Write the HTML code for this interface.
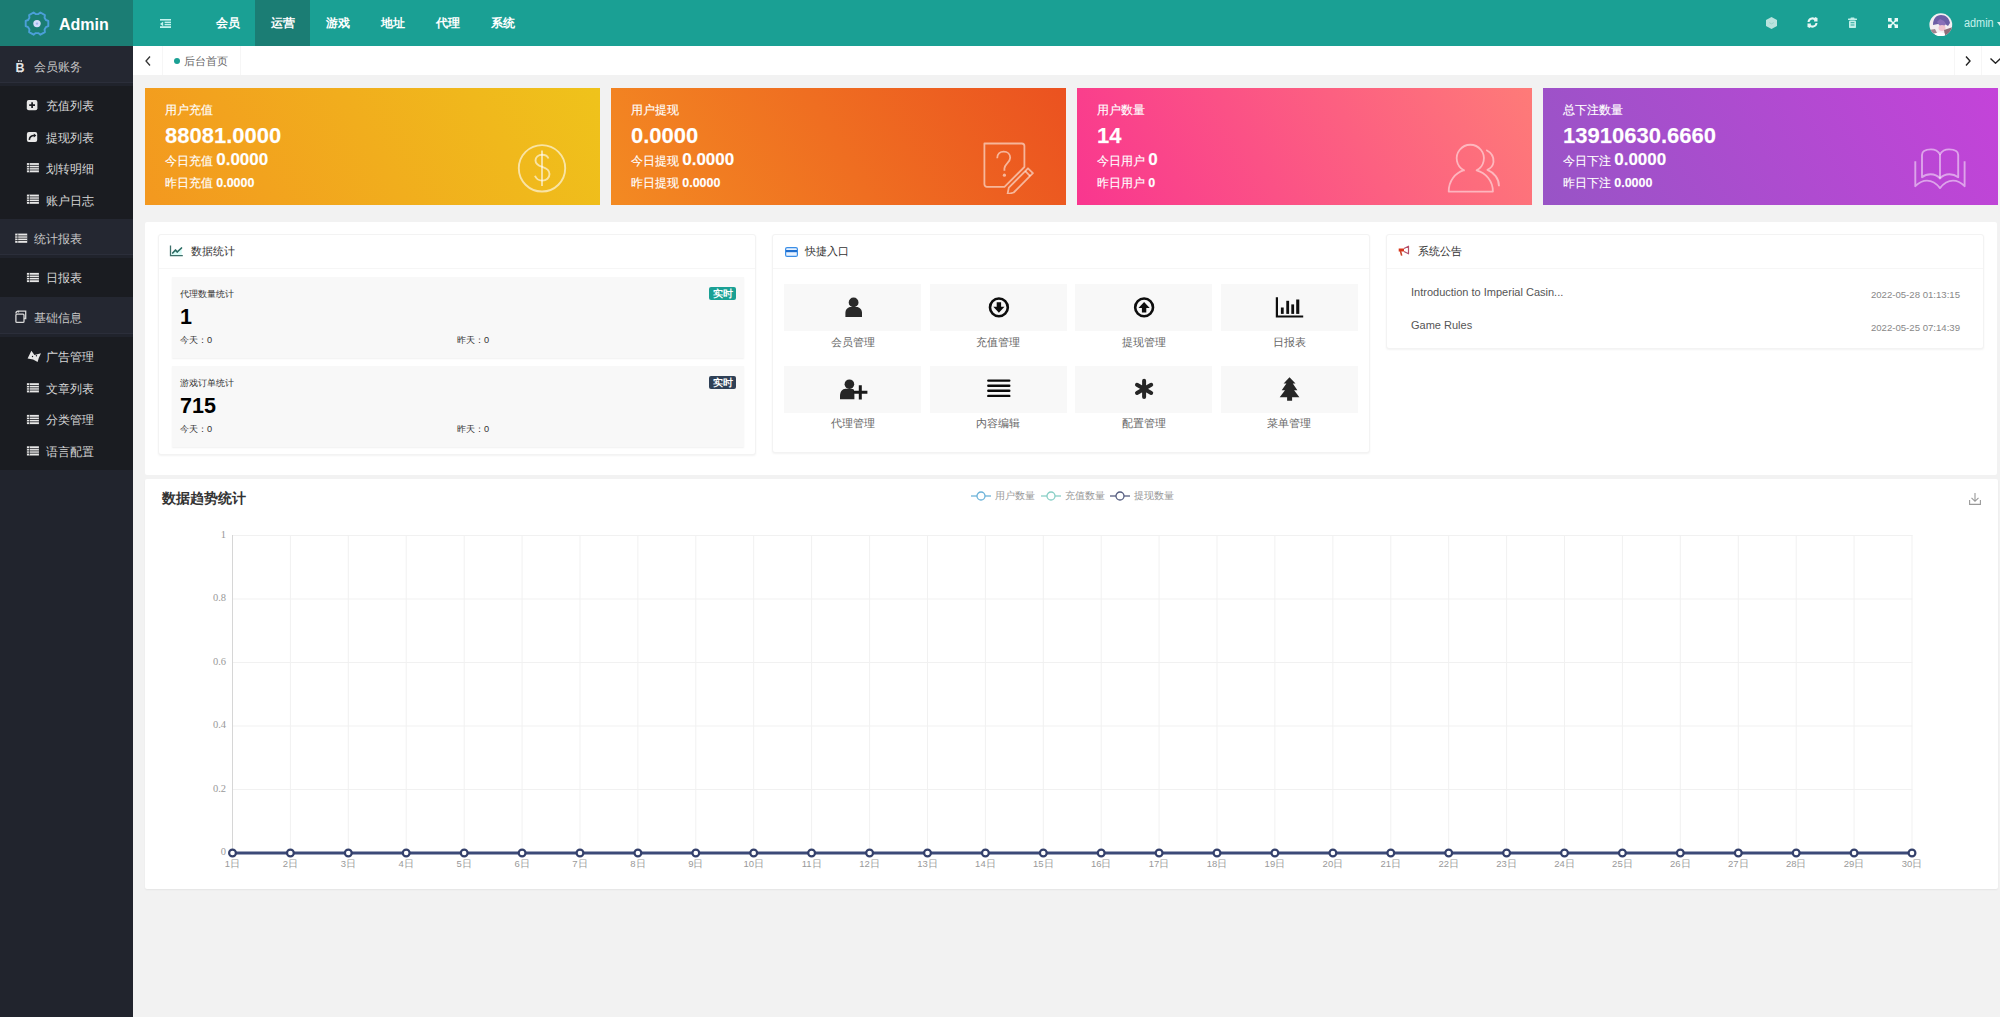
<!DOCTYPE html>
<html><head><meta charset="utf-8">
<style>
*{margin:0;padding:0;box-sizing:border-box}
html,body{width:2000px;height:1017px;overflow:hidden;background:#f2f2f2;font-family:"Liberation Sans",sans-serif;color:#333}
.abs{position:absolute}
#hdr{position:absolute;left:0;top:0;width:2000px;height:46px;background:#1aa094}
#logo{position:absolute;left:0;top:0;width:133px;height:46px;background:#1b7d74}
#logo .t{position:absolute;left:59px;top:14.5px;font-size:16px;font-weight:bold;color:#fff;line-height:20px}
.nav{position:absolute;top:0;height:46px;line-height:46px;width:55px;text-align:center;color:#fff;font-size:12px;font-weight:bold}
.nav.on{background:#1b7d74}
#side{position:absolute;left:0;top:46px;width:133px;height:971px;background:#21242d}
.pi{position:absolute;left:0;width:133px;height:40px;background:#242731;color:#c8c8c8;font-size:11.5px;line-height:40px;box-shadow:inset 0 -3px 0 #20232c,inset 0 -4px 0 #2b2e3a}
.sub{position:absolute;left:0;width:133px;background:#1a1c21}
.si{position:absolute;left:0;width:133px;height:31.5px;line-height:31.5px;color:#d6d6d6;font-size:11.5px}
.pi>span,.si>span{top:1px}
#tabs{position:absolute;left:133px;top:46px;width:1867px;height:29px;background:#fff}
.stat{position:absolute;top:88px;width:455px;height:117px;color:#fff;-webkit-text-stroke:.25px rgba(255,255,255,.6)}
.stat .t1{position:absolute;left:20px;top:14px;font-size:11.5px;line-height:16px}
.stat .t2{position:absolute;left:20px;top:34.5px;font-size:22px;font-weight:bold;line-height:26px}
.stat .t3{position:absolute;left:20px;top:62.5px;font-size:11.5px;line-height:18px}
.stat .t3 b{font-size:17px}
.stat .t4{position:absolute;left:20px;top:87px;font-size:11.5px;line-height:16px}
.stat .t4 span{font-size:12.5px;font-weight:bold}
.panel{position:absolute;background:#fff;border-radius:2px}
.card{position:absolute;background:#fff;border:1px solid #f3f3f3;border-radius:3px;box-shadow:0 1px 2px rgba(0,0,0,.05)}
.card .hd{position:absolute;left:0;top:0;right:0;height:34px;border-bottom:1px solid #f6f6f6;font-size:11px;line-height:33px;color:#333}
.sbox{position:absolute;left:13px;width:572px;height:81px;background:#f8f8f8;box-shadow:0 1px 1.5px rgba(0,0,0,.06)}
.qt{position:absolute;width:137px;height:47px;background:#f8f8f8}
.ql{position:absolute;width:137px;text-align:center;font-size:11px;color:#666;line-height:14px;margin-top:-1.5px}
</style></head><body>
<div id="hdr">
  <div id="logo">
    <svg class="abs" style="left:24px;top:11px" width="26" height="25" viewBox="0 0 26 25"><path d="M21.90 9.00 L24.30 9.99 L24.30 15.21 L21.90 16.20 L20.56 18.51 L20.91 21.08 L16.39 23.69 L14.34 22.11 L11.66 22.11 L9.61 23.69 L5.09 21.08 L5.44 18.51 L4.10 16.20 L1.70 15.21 L1.70 9.99 L4.10 9.00 L5.44 6.69 L5.09 4.12 L9.61 1.51 L11.66 3.09 L14.34 3.09 L16.39 1.51 L20.91 4.12 L20.56 6.69Z" fill="none" stroke="#4b9fd8" stroke-width="1.9" stroke-linejoin="round"/><circle cx="13" cy="12.6" r="3.7" fill="#d4dcfb"/><circle cx="13" cy="12.6" r="1.2" fill="#9fb3ea"/></svg>
    <div class="t">Admin</div>
  </div>
  <svg class="abs" style="left:159.8px;top:18.9px" width="11.4" height="9.2" viewBox="0 0 11.4 9.2"><g fill="#c4f3ee"><rect x="0" y="0" width="11.4" height="1.6"/><rect x="4.6" y="2.6" width="6.8" height="1.6"/><rect x="4.6" y="5" width="6.8" height="1.3"/><rect x="0" y="7.2" width="11.4" height="2"/><path d="M3.2 2.6v4.6L0 4.9z"/></g></svg>
  <div class="nav" style="left:200px">会员</div>
  <div class="nav on" style="left:255px">运营</div>
  <div class="nav" style="left:310px">游戏</div>
  <div class="nav" style="left:365px">地址</div>
  <div class="nav" style="left:420px">代理</div>
  <div class="nav" style="left:475px">系统</div>
  <!-- right icons -->
  <svg class="abs" style="left:1766px;top:17px" width="11" height="12" viewBox="0 0 11 12"><path d="M5.5 0L11 3v6l-5.5 3L0 9V3z" fill="#b9e3de"/><path d="M3.2 5.6l2.3 1.3 2.3-1.3" fill="none" stroke="#8fd0c8" stroke-width=".8"/></svg>
  <svg class="abs" style="left:1807px;top:17px" width="11" height="11" viewBox="0 0 11 11"><g fill="none" stroke="#e6f6f4" stroke-width="2"><path d="M1.5 5A4 4 0 0 1 9 3.5"/><path d="M9.5 6A4 4 0 0 1 2 7.5"/></g><path d="M8 0l2.5 1v3.5H7z" fill="#e6f6f4"/><path d="M3 11L.5 10V6.5H4z" fill="#e6f6f4"/></svg>
  <svg class="abs" style="left:1847px;top:17px" width="11" height="12" viewBox="0 0 11 12"><g fill="#c2efe9"><rect x="3.5" y=".4" width="4" height="1.6" rx=".6"/><rect x="1" y="1.5" width="9" height="1.5" rx=".5"/><rect x="2" y="3.5" width="7" height="7.6" rx="1.2"/></g><path d="M3.6 5.7h3.8M3.6 8h3.8" stroke="#1aa094" stroke-width=".9"/></svg>
  <svg class="abs" style="left:1887.9px;top:17.8px" width="10.2" height="10" viewBox="0 0 10.2 10"><g fill="#eafaf8"><rect x="0" y="0" width="3.6" height="3.6"/><rect x="6.6" y="0" width="3.6" height="3.6"/><rect x="0" y="6.4" width="3.6" height="3.6"/><rect x="6.6" y="6.4" width="3.6" height="3.6"/></g><path d="M2 2l6.2 6M8.2 2L2 8" stroke="#eafaf8" stroke-width="1.4"/></svg>
  <svg class="abs" style="left:1929px;top:12.5px" width="24" height="24" viewBox="0 0 24 24"><defs><clipPath id="avc"><circle cx="11.8" cy="11.7" r="11.4"/></clipPath></defs><g clip-path="url(#avc)"><rect width="24" height="24" fill="#f4eef2"/><path d="M4 12c0-6 3-10 8-10s8 3 9 8l-2 3-3-2-3 1-4-1z" fill="#6d5ea6"/><path d="M8 9l3-3 4 2 2 3-2 2-4 0z" fill="#8a6fb8"/><ellipse cx="13" cy="15" rx="3.5" ry="3" fill="#f2c3cf"/><path d="M15 17l9-3v8l-8 1z" fill="#8f6d79"/><path d="M0 17l6-1 2 4-8 1z" fill="#a18590"/><path d="M6 21c2-2 8-2 10 0v3H6z" fill="#fff"/></g></svg>
  <div class="abs" style="left:1964px;top:14.5px;font-size:12.5px;line-height:16px;color:#c6f1ec;transform:scaleX(.87);transform-origin:0 0">admin</div>
  <svg class="abs" style="left:1997px;top:21.5px" width="6" height="4" viewBox="0 0 6 4"><path d="M0 0h6L3 4z" fill="#d9f1ee"/></svg>
</div>

<div id="side">
  <div class="pi" style="top:0"><span class="abs" style="left:34px">会员账务</span></div>
  <div class="sub" style="top:40px;height:133px">
    <div class="si" style="top:4px"><span class="abs" style="left:46px">充值列表</span></div>
    <div class="si" style="top:35.5px"><span class="abs" style="left:46px">提现列表</span></div>
    <div class="si" style="top:67px"><span class="abs" style="left:46px">划转明细</span></div>
    <div class="si" style="top:98.5px"><span class="abs" style="left:46px">账户日志</span></div>
  </div>
  <div class="pi" style="top:173px;height:39px;line-height:39px"><span class="abs" style="left:34px">统计报表</span></div>
  <div class="sub" style="top:212px;height:39px">
    <div class="si" style="top:4px"><span class="abs" style="left:46px">日报表</span></div>
  </div>
  <div class="pi" style="top:251px"><span class="abs" style="left:34px">基础信息</span></div>
  <div class="sub" style="top:291px;height:133px">
    <div class="si" style="top:4px"><span class="abs" style="left:46px">广告管理</span></div>
    <div class="si" style="top:35.5px"><span class="abs" style="left:46px">文章列表</span></div>
    <div class="si" style="top:67px"><span class="abs" style="left:46px">分类管理</span></div>
    <div class="si" style="top:98.5px"><span class="abs" style="left:46px">语言配置</span></div>
  </div>
<svg class="abs" style="left:0;top:0" width="133" height="480" viewBox="0 46 133 480"><text x="15.6" y="71.6" font-weight="bold" font-size="12.5" fill="#e6e6e6">B</text><path d="M18.8 59.9v2M21.2 59.9v2M18.8 71v1.5M21.2 71v1.5" stroke="#e6e6e6" stroke-width="1.1"/><rect x="26.8" y="100.1" width="10.6" height="10.1" rx="2" fill="#e8e8e8"/><path d="M32.1 102.3v5.8M29.2 105.2h5.8" stroke="#1a1c21" stroke-width="1.7"/><rect x="26.9" y="131.9" width="10.3" height="10.1" rx="2" fill="#e8e8e8"/><path d="M29.3 139.8c.3-3 2.2-4.3 5-4.3" fill="none" stroke="#1a1c21" stroke-width="1.6"/><path d="M33.8 133.6l2.6 1.9-2.6 1.9z" fill="#1a1c21"/><g transform="translate(26.9 163.1)"><rect x="0" y="0" width="12" height="9.2" fill="#e8e8e8"/><path d="M0 2.3h12M0 4.6h12M0 6.9h12" stroke="#1a1c21" stroke-width=".8"/><path d="M2.6 0v9.2" stroke="#1a1c21" stroke-width=".6"/></g><g transform="translate(26.9 194.6)"><rect x="0" y="0" width="12" height="9.2" fill="#e8e8e8"/><path d="M0 2.3h12M0 4.6h12M0 6.9h12" stroke="#1a1c21" stroke-width=".8"/><path d="M2.6 0v9.2" stroke="#1a1c21" stroke-width=".6"/></g><g transform="translate(15.2 233.6)"><rect x="0" y="0" width="12" height="9.2" fill="#e8e8e8"/><path d="M0 2.3h12M0 4.6h12M0 6.9h12" stroke="#1a1c21" stroke-width=".8"/><path d="M2.6 0v9.2" stroke="#1a1c21" stroke-width=".6"/></g><g transform="translate(26.9 272.9)"><rect x="0" y="0" width="12" height="9.2" fill="#e8e8e8"/><path d="M0 2.3h12M0 4.6h12M0 6.9h12" stroke="#1a1c21" stroke-width=".8"/><path d="M2.6 0v9.2" stroke="#1a1c21" stroke-width=".6"/></g><g transform="translate(26.9 383.2)"><rect x="0" y="0" width="12" height="9.2" fill="#e8e8e8"/><path d="M0 2.3h12M0 4.6h12M0 6.9h12" stroke="#1a1c21" stroke-width=".8"/><path d="M2.6 0v9.2" stroke="#1a1c21" stroke-width=".6"/></g><g transform="translate(26.9 414.9)"><rect x="0" y="0" width="12" height="9.2" fill="#e8e8e8"/><path d="M0 2.3h12M0 4.6h12M0 6.9h12" stroke="#1a1c21" stroke-width=".8"/><path d="M2.6 0v9.2" stroke="#1a1c21" stroke-width=".6"/></g><g transform="translate(26.9 446.3)"><rect x="0" y="0" width="12" height="9.2" fill="#e8e8e8"/><path d="M0 2.3h12M0 4.6h12M0 6.9h12" stroke="#1a1c21" stroke-width=".8"/><path d="M2.6 0v9.2" stroke="#1a1c21" stroke-width=".6"/></g><g fill="none" stroke="#d8d8d8" stroke-width="1.3"><path d="M18.5 312.5v-1.3h7.2v7.3H24"/><rect x="15.9" y="314.2" width="8.1" height="8.2" rx="1"/></g><path d="M15.9 313.5c0-1.5.8-2.3 2.4-2.3" fill="none" stroke="#d8d8d8" stroke-width="1.3"/><path d="M27.6 358.6l3.8-7.8 3 4.3 6.6-1.8-2.2 4.8-1.2 4-4.5-2.5z" fill="#e6e6e6"/><circle cx="32.5" cy="356.5" r=".7" fill="#1a1c21"/><circle cx="36.4" cy="355.8" r=".7" fill="#1a1c21"/></svg>
</div>

<div id="tabs">
  <div class="abs" style="left:29px;top:0;width:1px;height:29px;background:#f6f6f6"></div>
  <svg class="abs" style="left:12px;top:10px" width="6" height="10" viewBox="0 0 6 10"><path d="M5 .5L1 5l4 4.5" fill="none" stroke="#333" stroke-width="1.3"/></svg>
  <div class="abs" style="left:41px;top:12px;width:6px;height:6px;border-radius:50%;background:#1aa094"></div>
  <div class="abs" style="left:51px;top:7px;font-size:11px;line-height:16px;color:#666">后台首页</div>
  <div class="abs" style="left:107px;top:0;width:1px;height:29px;background:#f6f6f6"></div>
  <div class="abs" style="left:1821px;top:0;width:1px;height:29px;background:#f6f6f6"></div>
  <div class="abs" style="left:1848px;top:0;width:1px;height:29px;background:#f6f6f6"></div>
  <svg class="abs" style="left:1832px;top:10px" width="6" height="10" viewBox="0 0 6 10"><path d="M1 .5L5 5 1 9.5" fill="none" stroke="#222" stroke-width="1.4"/></svg>
  <svg class="abs" style="left:1857px;top:12px" width="11" height="6" viewBox="0 0 11 6"><path d="M.5.5L5.5 5.2 10.5.5" fill="none" stroke="#222" stroke-width="1.4"/></svg>
</div>

<div class="stat" style="left:145px;background:linear-gradient(60deg,#f3981f 0%,#efc31b 100%)">
  <div class="t1">用户充值</div><div class="t2">88081.0000</div>
  <div class="t3">今日充值 <b>0.0000</b></div><div class="t4">昨日充值 <span>0.0000</span></div>
  <svg class="abs" style="left:372px;top:55px" width="50" height="50" viewBox="0 0 50 50"><g fill="none" stroke="rgba(255,255,255,.6)" stroke-width="1.9"><circle cx="25" cy="25.3" r="23.2"/><path d="M25 7.5v35.5"/><path d="M31.5 15.5c-1-2.6-3.3-3.8-6.3-3.8-4 0-6.7 2.6-6.7 5.8 0 3.5 2.6 5 6.8 6.4 4.7 1.5 7.2 3.3 7.2 7.2 0 3.7-3 6.5-7.2 6.5-3.6 0-6.2-1.7-7.3-4.8"/></g></svg>
</div>
<div class="stat" style="left:611px;background:linear-gradient(60deg,#f38a22 0%,#eb5220 100%)">
  <div class="t1">用户提现</div><div class="t2">0.0000</div>
  <div class="t3">今日提现 <b>0.0000</b></div><div class="t4">昨日提现 <span>0.0000</span></div>
  <svg class="abs" style="left:371px;top:54px" width="52" height="52" viewBox="0 0 52 52"><g fill="none" stroke="rgba(255,255,255,.55)" stroke-width="1.8" stroke-linejoin="round"><path d="M2.4 1.5h37.4c1.5 0 2.6 1.1 2.6 2.6V25L22.5 44.8H5c-1.5 0-2.6-1.1-2.6-2.6z"/><path d="M25.5 52.2l1.3-6.6 19.2-19.3 4.9 4.9-19.2 19.3z"/><path d="M43.3 29.2l4.9 4.9"/><path d="M15.2 16.2c0-3.8 2.6-6.6 6.5-6.6 3.8 0 6.5 2.6 6.5 6.2 0 4.7-5.8 5.8-5.8 10.8v2.2"/></g><circle cx="22.4" cy="33.2" r="1.6" fill="rgba(255,255,255,.55)"/></svg>
</div>
<div class="stat" style="left:1077px;background:linear-gradient(60deg,#f9368f 0%,#fe7b78 100%)">
  <div class="t1">用户数量</div><div class="t2">14</div>
  <div class="t3">今日用户 <b>0</b></div><div class="t4">昨日用户 <span>0</span></div>
  <svg class="abs" style="left:363px;top:52px" width="70" height="60" viewBox="1440 140 70 60"><g fill="none" stroke="rgba(255,255,255,.5)" stroke-width="1.8" stroke-linejoin="round"><path d="M1464 170.4A13.6 13.6 0 1 1 1476.6 170.4C1486 173 1492.9 181 1492.9 191.6H1448.7C1448.7 181 1455 173 1464 170.2z"/><path d="M1486.2 150C1491 152.5 1494 157 1493.5 162 1493 166 1490.5 168.5 1487.4 169.8 1494 172.5 1499 178.5 1499 186.2"/></g></svg>
</div>
<div class="stat" style="left:1543px;background:linear-gradient(60deg,#9854c6 0%,#c443d9 100%)">
  <div class="t1">总下注数量</div><div class="t2">13910630.6660</div>
  <div class="t3">今日下注 <b>0.0000</b></div><div class="t4">昨日下注 <span>0.0000</span></div>
  <svg class="abs" style="left:367px;top:57px" width="60" height="50" viewBox="1910 145 60 50"><g fill="none" stroke="rgba(255,255,255,.5)" stroke-width="1.9" stroke-linejoin="round"><path d="M1915.3 161.2V186.2C1919.5 182 1923 180.6 1927 180.6 1932.5 180.6 1936.5 183.5 1940 188.1 1943.5 183.5 1947.5 180.6 1953 180.6 1957 180.6 1960.5 182 1964.6 186.2V161.2"/><path d="M1922 177.2V155C1922 151.5 1925.5 149.4 1931 149.4 1935 149.4 1938 151 1940 154.2 1942 151 1945 149.4 1949 149.4 1954.5 149.4 1958.2 151.5 1958.2 155V177.2C1955.5 175.2 1952.5 174.3 1949.5 174.3 1945.5 174.3 1942.2 175.8 1940 178.5 1937.8 175.8 1934.5 174.3 1930.5 174.3 1927.5 174.3 1924.5 175.2 1922 177.2z"/><path d="M1940 154.2V178.5"/></g></svg>
</div>

<div class="panel" style="left:145px;top:222px;width:1852px;height:253px"></div>

<div class="card" style="left:158px;top:234px;width:598px;height:221px">
  <div class="hd"><svg class="abs" style="left:10px;top:9px" width="15" height="13" viewBox="0 0 15 13"><path d="M2.2 10.8L3.7 9 6.5 6 8.2 8 12.7 3.8V11H2.2z" fill="#d9fbf6"/><path d="M1.5 1.4V11.6H13.8" fill="none" stroke="#3d6f6a" stroke-width="1.3"/><path d="M3.7 9L6.5 6 8.2 8 12.5 4" fill="none" stroke="#2a6a62" stroke-width="1.7" stroke-linecap="round" stroke-linejoin="round"/></svg><span class="abs" style="left:32px">数据统计</span></div>
  <div class="sbox" style="top:42px">
    <div class="abs" style="left:8px;top:11px;font-size:9px;line-height:13px;color:#333">代理数量统计</div>
    <div class="abs" style="right:8px;top:10px;width:27px;height:13px;background:#1aa094;border-radius:2px;color:#fff;font-size:9.5px;font-weight:bold;line-height:13px;text-align:center">实时</div>
    <div class="abs" style="left:8px;top:27.8px;font-size:21.5px;font-weight:bold;line-height:24px;color:#000">1</div>
    <div class="abs" style="left:8px;top:57px;font-size:9.2px;line-height:13px;color:#333">今天：0</div>
    <div class="abs" style="left:285px;top:57px;font-size:9.2px;line-height:13px;color:#333">昨天：0</div>
  </div>
  <div class="sbox" style="top:131px">
    <div class="abs" style="left:8px;top:11px;font-size:9px;line-height:13px;color:#333">游戏订单统计</div>
    <div class="abs" style="right:8px;top:10px;width:27px;height:13px;background:#2f4056;border-radius:2px;color:#fff;font-size:9.5px;font-weight:bold;line-height:13px;text-align:center">实时</div>
    <div class="abs" style="left:8px;top:27.8px;font-size:21.5px;font-weight:bold;line-height:24px;color:#000">715</div>
    <div class="abs" style="left:8px;top:57px;font-size:9.2px;line-height:13px;color:#333">今天：0</div>
    <div class="abs" style="left:285px;top:57px;font-size:9.2px;line-height:13px;color:#333">昨天：0</div>
  </div>
</div>
<div class="card" style="left:772px;top:234px;width:598px;height:219px">
  <div class="hd"><svg class="abs" style="left:12px;top:12px" width="13" height="10" viewBox="0 0 13 10"><rect x=".6" y=".6" width="11.8" height="8.8" rx="1.5" fill="#e8f2ff" stroke="#3b8ee6" stroke-width="1.2"/><rect x="1" y="3" width="11" height="2.2" fill="#1f6fcf"/></svg><span class="abs" style="left:32px">快捷入口</span></div>
  <div class="qt" style="left:11.0px;top:49px"></div>
  <div class="ql" style="left:11.0px;top:101.0px">会员管理</div>
  <div class="qt" style="left:156.5px;top:49px"></div>
  <div class="ql" style="left:156.5px;top:101.0px">充值管理</div>
  <div class="qt" style="left:302.0px;top:49px"></div>
  <div class="ql" style="left:302.0px;top:101.0px">提现管理</div>
  <div class="qt" style="left:447.5px;top:49px"></div>
  <div class="ql" style="left:447.5px;top:101.0px">日报表</div>
  <div class="qt" style="left:11.0px;top:130.5px"></div>
  <div class="ql" style="left:11.0px;top:182.5px">代理管理</div>
  <div class="qt" style="left:156.5px;top:130.5px"></div>
  <div class="ql" style="left:156.5px;top:182.5px">内容编辑</div>
  <div class="qt" style="left:302.0px;top:130.5px"></div>
  <div class="ql" style="left:302.0px;top:182.5px">配置管理</div>
  <div class="qt" style="left:447.5px;top:130.5px"></div>
  <div class="ql" style="left:447.5px;top:182.5px">菜单管理</div>
</div>
<svg class="abs" style="left:0;top:0" width="2000" height="1017" viewBox="0 0 2000 1017">
<g fill="#2a2a2a">
 <circle cx="853.6" cy="302.4" r="4.9"/>
 <path d="M845.4 317v-4.2c0-3.4 2.4-5.9 5.6-5.9h5.4c3.2 0 5.6 2.5 5.6 5.9V317z"/>
</g>
<g fill="none" stroke="#0e0e0e" stroke-width="2.6"><circle cx="998.9" cy="307.4" r="8.9"/><circle cx="1144.1" cy="307.4" r="8.9"/></g>
<g fill="#0e0e0e">
 <path d="M996.7 302.2h4.4v4.6h3.4l-5.6 6-5.6-6h3.4z"/>
 <path d="M1141.9 312.6h4.4v-4.6h3.4l-5.6-6-5.6 6h3.4z"/>
 <path d="M1275.8 297.2h2.2v18.4h25.2v1.9h-27.4z"/>
 <rect x="1280.9" y="307.5" width="2.8" height="6.4"/>
 <rect x="1286.3" y="300.8" width="2.8" height="13.1"/>
 <rect x="1291.3" y="304.4" width="2.8" height="9.5"/>
 <rect x="1296.2" y="299.5" width="3.1" height="14.4"/>
</g>
<g fill="#262626">
 <circle cx="849.4" cy="384.2" r="4.8"/>
 <path d="M840 399.3v-3.8c0-3.6 2.3-6.7 5.6-6.7h5.2c1.4 0 2.6.4 3.6 1.1v9.4z"/>
</g>
<path d="M860.3 384.3v6.3h6.3M860.3 384.3v6.3h-6.3M860.3 399.3v-8.7" fill="none" stroke="#f8f8f8" stroke-width="6"/>
<g stroke="#1a1a1a" stroke-width="3" fill="none"><path d="M860.3 385.2v14.2M853.2 392.3h14.2"/></g>
<g stroke="#0a0a0a" stroke-width="2.4" stroke-linecap="round"><path d="M988.3 380.6h21M988.3 385.7h21M988.3 390.8h21M988.3 395.9h21"/></g>
<g stroke="#262626" stroke-width="4" stroke-linecap="round"><path d="M1144.1 380.8v16.2M1137 384.8l14.2 8.2M1137 393l14.2-8.2"/></g>
<path fill="#262626" d="M1289.5 377.2l-5.9 6.3h2.8l-4.7 6.8h3.3l-5.3 6.9h7.4v3.5h5v-3.5h7.3l-5.3-6.9h3.3l-4.6-6.8h2.7z"/>
</svg>
<div class="card" style="left:1386px;top:234px;width:598px;height:115px">
  <div class="hd"><svg class="abs" style="left:10px;top:9px" width="14" height="13" viewBox="0 0 14 13"><path d="M1.7 4.5H7V7.5H1.7z" fill="#d9361c"/><path d="M3.4 7l1.3 4.6" stroke="#c8452a" stroke-width="1.6"/><path d="M7 4.5L11.5 2.2V9.8L7 7.5" fill="none" stroke="#b4506a" stroke-width="1.2" stroke-linejoin="round"/></svg><span class="abs" style="left:31px">系统公告</span></div>
  <div class="abs" style="left:24px;top:50px;font-size:11px;line-height:14px;color:#555">Introduction to Imperial Casin...</div>
  <div class="abs" style="right:23px;top:53.5px;font-size:9.6px;line-height:12px;color:#888">2022-05-28 01:13:15</div>
  <div class="abs" style="left:24px;top:83px;font-size:11px;line-height:14px;color:#555">Game Rules</div>
  <div class="abs" style="right:23px;top:86.5px;font-size:9.6px;line-height:12px;color:#888">2022-05-25 07:14:39</div>
</div>

<div class="panel" style="left:145px;top:479px;width:1853px;height:410px;box-shadow:0 1px 2px rgba(0,0,0,.06)"></div>
<div class="abs" style="left:162px;top:489px;font-size:14px;line-height:18px;font-weight:bold;color:#333">数据趋势统计</div>
<div class="abs" style="left:971px;top:489.2px;width:220px;height:14px;font-size:9.6px;line-height:14px;color:#999">
  <svg class="abs" style="left:0;top:2px" width="20" height="10" viewBox="0 0 20 10"><path d="M0 5h20" stroke="#6cb3d9" stroke-width="1.3"/><circle cx="10" cy="5" r="4" fill="#fff" stroke="#6cb3d9" stroke-width="1.3"/></svg><span class="abs" style="left:24px">用户数量</span>
  <svg class="abs" style="left:70px;top:2px" width="20" height="10" viewBox="0 0 20 10"><path d="M0 5h20" stroke="#88cfc6" stroke-width="1.3"/><circle cx="10" cy="5" r="4" fill="#fff" stroke="#88cfc6" stroke-width="1.3"/></svg><span class="abs" style="left:94px">充值数量</span>
  <svg class="abs" style="left:139px;top:2px" width="20" height="10" viewBox="0 0 20 10"><path d="M0 5h20" stroke="#555d80" stroke-width="1.3"/><circle cx="10" cy="5" r="4" fill="#fff" stroke="#555d80" stroke-width="1.3"/></svg><span class="abs" style="left:163px">提现数量</span>
</div>
<svg class="abs" style="left:1969px;top:493px" width="12" height="12" viewBox="0 0 12 12"><path d="M6 0v8M2.5 4.8L6 8.3l3.5-3.5M.6 7v4.4h10.8V7" fill="none" stroke="#999" stroke-width="1.1"/></svg>
<svg class="abs" style="left:0;top:0" width="2000" height="1017" viewBox="0 0 2000 1017">
<line x1="232.5" y1="535.5" x2="1912.5" y2="535.5" stroke="#f1f1f1" stroke-width="1"/>
<line x1="232.5" y1="599.0" x2="1912.5" y2="599.0" stroke="#f1f1f1" stroke-width="1"/>
<line x1="232.5" y1="662.5" x2="1912.5" y2="662.5" stroke="#f1f1f1" stroke-width="1"/>
<line x1="232.5" y1="726.0" x2="1912.5" y2="726.0" stroke="#f1f1f1" stroke-width="1"/>
<line x1="232.5" y1="789.5" x2="1912.5" y2="789.5" stroke="#f1f1f1" stroke-width="1"/>
<line x1="290.4" y1="535" x2="290.4" y2="853" stroke="#f1f1f1" stroke-width="1"/>
<line x1="348.3" y1="535" x2="348.3" y2="853" stroke="#f1f1f1" stroke-width="1"/>
<line x1="406.2" y1="535" x2="406.2" y2="853" stroke="#f1f1f1" stroke-width="1"/>
<line x1="464.2" y1="535" x2="464.2" y2="853" stroke="#f1f1f1" stroke-width="1"/>
<line x1="522.1" y1="535" x2="522.1" y2="853" stroke="#f1f1f1" stroke-width="1"/>
<line x1="580.0" y1="535" x2="580.0" y2="853" stroke="#f1f1f1" stroke-width="1"/>
<line x1="637.9" y1="535" x2="637.9" y2="853" stroke="#f1f1f1" stroke-width="1"/>
<line x1="695.8" y1="535" x2="695.8" y2="853" stroke="#f1f1f1" stroke-width="1"/>
<line x1="753.7" y1="535" x2="753.7" y2="853" stroke="#f1f1f1" stroke-width="1"/>
<line x1="811.6" y1="535" x2="811.6" y2="853" stroke="#f1f1f1" stroke-width="1"/>
<line x1="869.6" y1="535" x2="869.6" y2="853" stroke="#f1f1f1" stroke-width="1"/>
<line x1="927.5" y1="535" x2="927.5" y2="853" stroke="#f1f1f1" stroke-width="1"/>
<line x1="985.4" y1="535" x2="985.4" y2="853" stroke="#f1f1f1" stroke-width="1"/>
<line x1="1043.3" y1="535" x2="1043.3" y2="853" stroke="#f1f1f1" stroke-width="1"/>
<line x1="1101.2" y1="535" x2="1101.2" y2="853" stroke="#f1f1f1" stroke-width="1"/>
<line x1="1159.1" y1="535" x2="1159.1" y2="853" stroke="#f1f1f1" stroke-width="1"/>
<line x1="1217.0" y1="535" x2="1217.0" y2="853" stroke="#f1f1f1" stroke-width="1"/>
<line x1="1274.9" y1="535" x2="1274.9" y2="853" stroke="#f1f1f1" stroke-width="1"/>
<line x1="1332.9" y1="535" x2="1332.9" y2="853" stroke="#f1f1f1" stroke-width="1"/>
<line x1="1390.8" y1="535" x2="1390.8" y2="853" stroke="#f1f1f1" stroke-width="1"/>
<line x1="1448.7" y1="535" x2="1448.7" y2="853" stroke="#f1f1f1" stroke-width="1"/>
<line x1="1506.6" y1="535" x2="1506.6" y2="853" stroke="#f1f1f1" stroke-width="1"/>
<line x1="1564.5" y1="535" x2="1564.5" y2="853" stroke="#f1f1f1" stroke-width="1"/>
<line x1="1622.4" y1="535" x2="1622.4" y2="853" stroke="#f1f1f1" stroke-width="1"/>
<line x1="1680.3" y1="535" x2="1680.3" y2="853" stroke="#f1f1f1" stroke-width="1"/>
<line x1="1738.3" y1="535" x2="1738.3" y2="853" stroke="#f1f1f1" stroke-width="1"/>
<line x1="1796.2" y1="535" x2="1796.2" y2="853" stroke="#f1f1f1" stroke-width="1"/>
<line x1="1854.1" y1="535" x2="1854.1" y2="853" stroke="#f1f1f1" stroke-width="1"/>
<line x1="1912.0" y1="535" x2="1912.0" y2="853" stroke="#f1f1f1" stroke-width="1"/>
<line x1="232.5" y1="535" x2="232.5" y2="853" stroke="#d6d6d6" stroke-width="1"/>
<text x="226" y="537.7" text-anchor="end" font-family="Liberation Serif" font-size="10.5" fill="#999">1</text>
<text x="226" y="601.2" text-anchor="end" font-family="Liberation Serif" font-size="10.5" fill="#999">0.8</text>
<text x="226" y="664.7" text-anchor="end" font-family="Liberation Serif" font-size="10.5" fill="#999">0.6</text>
<text x="226" y="728.2" text-anchor="end" font-family="Liberation Serif" font-size="10.5" fill="#999">0.4</text>
<text x="226" y="791.7" text-anchor="end" font-family="Liberation Serif" font-size="10.5" fill="#999">0.2</text>
<text x="226" y="855.2" text-anchor="end" font-family="Liberation Serif" font-size="10.5" fill="#999">0</text>
<text x="232.5" y="867" text-anchor="middle" font-size="9.5" fill="#999">1日</text>
<text x="290.4" y="867" text-anchor="middle" font-size="9.5" fill="#999">2日</text>
<text x="348.3" y="867" text-anchor="middle" font-size="9.5" fill="#999">3日</text>
<text x="406.2" y="867" text-anchor="middle" font-size="9.5" fill="#999">4日</text>
<text x="464.2" y="867" text-anchor="middle" font-size="9.5" fill="#999">5日</text>
<text x="522.1" y="867" text-anchor="middle" font-size="9.5" fill="#999">6日</text>
<text x="580.0" y="867" text-anchor="middle" font-size="9.5" fill="#999">7日</text>
<text x="637.9" y="867" text-anchor="middle" font-size="9.5" fill="#999">8日</text>
<text x="695.8" y="867" text-anchor="middle" font-size="9.5" fill="#999">9日</text>
<text x="753.7" y="867" text-anchor="middle" font-size="9.5" fill="#999">10日</text>
<text x="811.6" y="867" text-anchor="middle" font-size="9.5" fill="#999">11日</text>
<text x="869.6" y="867" text-anchor="middle" font-size="9.5" fill="#999">12日</text>
<text x="927.5" y="867" text-anchor="middle" font-size="9.5" fill="#999">13日</text>
<text x="985.4" y="867" text-anchor="middle" font-size="9.5" fill="#999">14日</text>
<text x="1043.3" y="867" text-anchor="middle" font-size="9.5" fill="#999">15日</text>
<text x="1101.2" y="867" text-anchor="middle" font-size="9.5" fill="#999">16日</text>
<text x="1159.1" y="867" text-anchor="middle" font-size="9.5" fill="#999">17日</text>
<text x="1217.0" y="867" text-anchor="middle" font-size="9.5" fill="#999">18日</text>
<text x="1274.9" y="867" text-anchor="middle" font-size="9.5" fill="#999">19日</text>
<text x="1332.9" y="867" text-anchor="middle" font-size="9.5" fill="#999">20日</text>
<text x="1390.8" y="867" text-anchor="middle" font-size="9.5" fill="#999">21日</text>
<text x="1448.7" y="867" text-anchor="middle" font-size="9.5" fill="#999">22日</text>
<text x="1506.6" y="867" text-anchor="middle" font-size="9.5" fill="#999">23日</text>
<text x="1564.5" y="867" text-anchor="middle" font-size="9.5" fill="#999">24日</text>
<text x="1622.4" y="867" text-anchor="middle" font-size="9.5" fill="#999">25日</text>
<text x="1680.3" y="867" text-anchor="middle" font-size="9.5" fill="#999">26日</text>
<text x="1738.3" y="867" text-anchor="middle" font-size="9.5" fill="#999">27日</text>
<text x="1796.2" y="867" text-anchor="middle" font-size="9.5" fill="#999">28日</text>
<text x="1854.1" y="867" text-anchor="middle" font-size="9.5" fill="#999">29日</text>
<text x="1912.0" y="867" text-anchor="middle" font-size="9.5" fill="#999">30日</text>
<line x1="232.5" y1="853" x2="1912" y2="853" stroke="#3c4a78" stroke-width="3"/>
<circle cx="232.5" cy="853" r="3.4" fill="#fff" stroke="#34406b" stroke-width="2.2"/>
<circle cx="290.4" cy="853" r="3.4" fill="#fff" stroke="#34406b" stroke-width="2.2"/>
<circle cx="348.3" cy="853" r="3.4" fill="#fff" stroke="#34406b" stroke-width="2.2"/>
<circle cx="406.2" cy="853" r="3.4" fill="#fff" stroke="#34406b" stroke-width="2.2"/>
<circle cx="464.2" cy="853" r="3.4" fill="#fff" stroke="#34406b" stroke-width="2.2"/>
<circle cx="522.1" cy="853" r="3.4" fill="#fff" stroke="#34406b" stroke-width="2.2"/>
<circle cx="580.0" cy="853" r="3.4" fill="#fff" stroke="#34406b" stroke-width="2.2"/>
<circle cx="637.9" cy="853" r="3.4" fill="#fff" stroke="#34406b" stroke-width="2.2"/>
<circle cx="695.8" cy="853" r="3.4" fill="#fff" stroke="#34406b" stroke-width="2.2"/>
<circle cx="753.7" cy="853" r="3.4" fill="#fff" stroke="#34406b" stroke-width="2.2"/>
<circle cx="811.6" cy="853" r="3.4" fill="#fff" stroke="#34406b" stroke-width="2.2"/>
<circle cx="869.6" cy="853" r="3.4" fill="#fff" stroke="#34406b" stroke-width="2.2"/>
<circle cx="927.5" cy="853" r="3.4" fill="#fff" stroke="#34406b" stroke-width="2.2"/>
<circle cx="985.4" cy="853" r="3.4" fill="#fff" stroke="#34406b" stroke-width="2.2"/>
<circle cx="1043.3" cy="853" r="3.4" fill="#fff" stroke="#34406b" stroke-width="2.2"/>
<circle cx="1101.2" cy="853" r="3.4" fill="#fff" stroke="#34406b" stroke-width="2.2"/>
<circle cx="1159.1" cy="853" r="3.4" fill="#fff" stroke="#34406b" stroke-width="2.2"/>
<circle cx="1217.0" cy="853" r="3.4" fill="#fff" stroke="#34406b" stroke-width="2.2"/>
<circle cx="1274.9" cy="853" r="3.4" fill="#fff" stroke="#34406b" stroke-width="2.2"/>
<circle cx="1332.9" cy="853" r="3.4" fill="#fff" stroke="#34406b" stroke-width="2.2"/>
<circle cx="1390.8" cy="853" r="3.4" fill="#fff" stroke="#34406b" stroke-width="2.2"/>
<circle cx="1448.7" cy="853" r="3.4" fill="#fff" stroke="#34406b" stroke-width="2.2"/>
<circle cx="1506.6" cy="853" r="3.4" fill="#fff" stroke="#34406b" stroke-width="2.2"/>
<circle cx="1564.5" cy="853" r="3.4" fill="#fff" stroke="#34406b" stroke-width="2.2"/>
<circle cx="1622.4" cy="853" r="3.4" fill="#fff" stroke="#34406b" stroke-width="2.2"/>
<circle cx="1680.3" cy="853" r="3.4" fill="#fff" stroke="#34406b" stroke-width="2.2"/>
<circle cx="1738.3" cy="853" r="3.4" fill="#fff" stroke="#34406b" stroke-width="2.2"/>
<circle cx="1796.2" cy="853" r="3.4" fill="#fff" stroke="#34406b" stroke-width="2.2"/>
<circle cx="1854.1" cy="853" r="3.4" fill="#fff" stroke="#34406b" stroke-width="2.2"/>
<circle cx="1912.0" cy="853" r="3.4" fill="#fff" stroke="#34406b" stroke-width="2.2"/>
</svg>

</body></html>
